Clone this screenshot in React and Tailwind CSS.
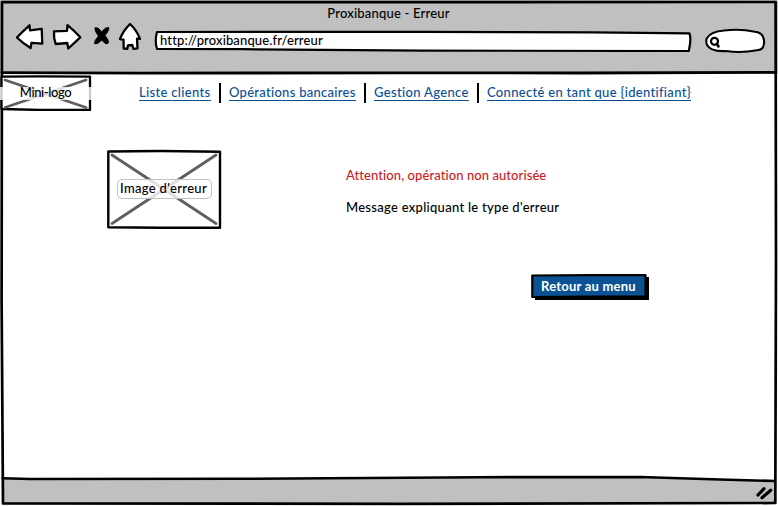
const ink = { fill: "none", stroke: "#000", strokeWidth: 3, strokeLinejoin: "round", strokeLinecap: "round" };

function WindowFrame() {
  return (
    <svg className="pointer-events-none absolute inset-0" width="778" height="506" viewBox="0 0 778 506">
      <path d="M2.5 478.5 L240 478.8 L480 477.2 L640 477 L775 481 L775 504 L2.5 504Z" fill="#c0c0c0" />
      <path d="M2.5 478.3 L30 479 L240 478.8 L480 477.2 L640 477 L720 479.5 L775 481" {...ink} strokeWidth="2.6" />
      <path d="M2 2 L390 2.2 L775.6 2 L776 260 L775.3 503 L400 503.8 L3 503.5 L1.6 300 Z" {...ink} strokeWidth="2.7" />
      <path d="M2 72.6 L140 73.2 L400 72.8 L580 73 L775 72.3" {...ink} strokeWidth="2.8" />
      <path d="M758 495 L764 488.7 M762 497.8 L770.7 490.3 M764 496 L769 491.8" {...ink} strokeWidth="3.2" />
    </svg>
  );
}

function NavIcons() {
  return (
    <svg className="block h-[30px] w-[126px] shrink-0" viewBox="16 22 126 30">
      <g {...ink} strokeWidth="2.3" fill="#fff">
        <path d="M16.9 37.5 Q23 31 29.5 25.3 L30 30.3 L41.7 28.8 L42.3 43.7 L31.5 42.8 L30.6 48 Q22.5 43 16.9 37.5Z" />
        <path d="M54 31.3 L67 30.8 L67.5 25.2 Q74.5 31 80.3 37.3 L68.3 48.5 L67.3 43 L55.7 44 Q53.5 38 54 31.3Z" />
        <path d="M130 24 Q137 30.5 140 38.8 L137 38.6 L137.5 48.3 L133.4 48.8 L132.3 45 L128 45.3 L127.3 48.8 L123.7 48.5 L123.5 39.7 L120 39 Q123 31 130 24Z" />
      </g>
      <path d="M95.2 28 Q98 26.5 101.5 32 Q105.5 26.8 108.7 27.5 Q109.5 30 105 35.5 Q109 40.5 108.3 43 Q106 45.5 101.8 40 Q97.5 44.5 94.7 43.8 Q93.8 41.5 98.5 36 Q94.2 30.5 95.2 28Z" {...ink} strokeWidth="1" fill="#000" />
    </svg>
  );
}

function Toolbar() {
  return (
    <div className="flex h-[31px] items-start pl-4">
      <NavIcons />
      <div className="relative ml-[11px] mt-[8px] h-[22px] w-[539px] shrink-0">
        <svg className="absolute inset-0" width="539" height="22" viewBox="0 0 539 22">
          <path d="M4 2 L270 1.8 L440 2.4 L536.5 3.4 Q538.5 9 535.8 21 L270 20.6 L90 19.2 L4 19 Q1.5 11 4 2Z" {...ink} strokeWidth="2.2" fill="#fff" />
        </svg>
        <span className="relative block whitespace-nowrap pl-[7px] pt-[2px] text-[13px] leading-4 tracking-[0.13px]">http://proxibanque.fr/erreur</span>
      </div>
      <svg className="ml-[12px] mt-[6px] block shrink-0" width="62" height="26" viewBox="704 28 62 26">
        <path d="M707 38 Q711 31.5 724 30.5 Q740 28.5 755 31.7 Q763 32.5 764 40 Q765 50 757 50.2 Q741 53.2 726 51 Q711 52 707 45 Q705.5 41 707 38Z" {...ink} strokeWidth="2.1" fill="#fff" />
        <circle cx="714.5" cy="41.3" r="3.5" {...ink} strokeWidth="2.2" />
        <path d="M717 44 L718.5 46.5" {...ink} strokeWidth="2.6" />
      </svg>
    </div>
  );
}

function Link({ width, spacing, children }) {
  return (
    <a className={`block h-[17px] shrink-0 whitespace-nowrap border-b border-[#0b4f93] text-[13px] leading-4 text-[#0b4f93] ${width} ${spacing}`}>
      {children}
    </a>
  );
}

function Divider() {
  return <span className="mx-2 -mt-px h-5 w-0.5 shrink-0 bg-black" />;
}

function MiniLogo() {
  return (
    <div className="relative flex h-[37px] w-[92px] shrink-0 items-center justify-center">
      <svg className="absolute inset-0" width="92" height="37" viewBox="0 0 92 37">
        <path d="M1.5 2.6 L40 2.4 L90 2.6 L90 36 L40 36 L1.5 35Z" {...ink} strokeWidth="2.3" fill="#fff" />
        <path d="M5 6 L86 33.5 M86 6 L5 33.5" {...ink} strokeWidth="2.8" stroke="#5f5f5f" />
        <path d="M0 13H92V26H0Z" fill="#fff" fillOpacity=".8" />
      </svg>
      <span className="relative mb-px mr-px whitespace-nowrap text-[13px] leading-4 tracking-[-0.4px]">Mini-logo</span>
    </div>
  );
}

function ErrorImage() {
  return (
    <div className="relative mt-[38px] flex h-[80px] w-[116px] shrink-0 items-center justify-center">
      <svg className="absolute inset-0" width="116" height="80" viewBox="0 0 116 80">
        <path d="M2.3 2.5 L55 2 L114 2.7 L114 78.7 L55 78.8 L2.3 78.3Z" {...ink} strokeWidth="2.4" fill="#fff" />
        <path d="M6 6 L110 74.5 M110 6 L6 74.5" {...ink} strokeWidth="2.8" stroke="#5f5f5f" />
      </svg>
      <span className="relative -mt-px ml-px flex h-[20px] w-[95px] items-center justify-center whitespace-nowrap rounded-[5px] border border-[#c0c0c0] bg-white/80 pb-px pr-[2px] text-[13px] leading-4 tracking-[0.33px]">
        Image d'erreur
      </span>
    </div>
  );
}

function ReturnButton() {
  return (
    <button className="relative ml-[184px] mt-[58px] block h-[28px] w-[120px]">
      <svg className="absolute inset-0" width="120" height="28" viewBox="0 0 120 28">
        <path d="M5 4 H119 V27 H5Z" fill="#000" />
        <path d="M2.3 2.5 L60 2.2 L115.5 2 L115.5 23.3 L60 23.5 L2.3 24Z" {...ink} strokeWidth="2.2" fill="#0b5394" />
      </svg>
      <span className="relative -top-px block whitespace-nowrap pr-[3px] text-center text-[13px] font-bold leading-4 tracking-[0.22px] text-white">Retour au menu</span>
    </button>
  );
}

export default function App() {
  return (
    <div className="relative h-[506px] w-[778px] overflow-hidden bg-white font-['Lato','Open_Sans',sans-serif] font-medium text-black">
      <header className="h-[74px] bg-[#c0c0c0]">
        <h1 className="h-[22px] pr-px pt-[5px] text-center text-[13px] font-medium leading-4 tracking-[0.2px]">Proxibanque - Erreur</h1>
        <Toolbar />
      </header>
      <WindowFrame />
      <nav className="relative flex h-[37px] items-start">
        <MiniLogo />
        <div className="ml-[47px] mt-[10px] flex items-start">
          <Link width="w-[72px]" spacing="tracking-[0.33px]">Liste clients</Link>
          <Divider />
          <Link width="w-[127px]" spacing="tracking-[0.28px]">Opérations bancaires</Link>
          <Divider />
          <Link width="w-[95px]" spacing="tracking-[0.34px]">Gestion Agence</Link>
          <Divider />
          <Link width="w-[204px]" spacing="tracking-[0.31px]">Connecté en tant que {"{identifiant}"}</Link>
        </div>
      </nav>
      <main className="relative flex items-start pl-[106px]">
        <ErrorImage />
        <section className="ml-[124px] mt-[56px]">
          <p className="whitespace-nowrap text-[13px] leading-4 tracking-[0.08px] text-[#c9211e]">Attention, opération non autorisée</p>
          <p className="mt-4 whitespace-nowrap text-[13px] leading-4 tracking-[0.28px]">Message expliquant le type d'erreur</p>
          <ReturnButton />
        </section>
      </main>
    </div>
  );
}
